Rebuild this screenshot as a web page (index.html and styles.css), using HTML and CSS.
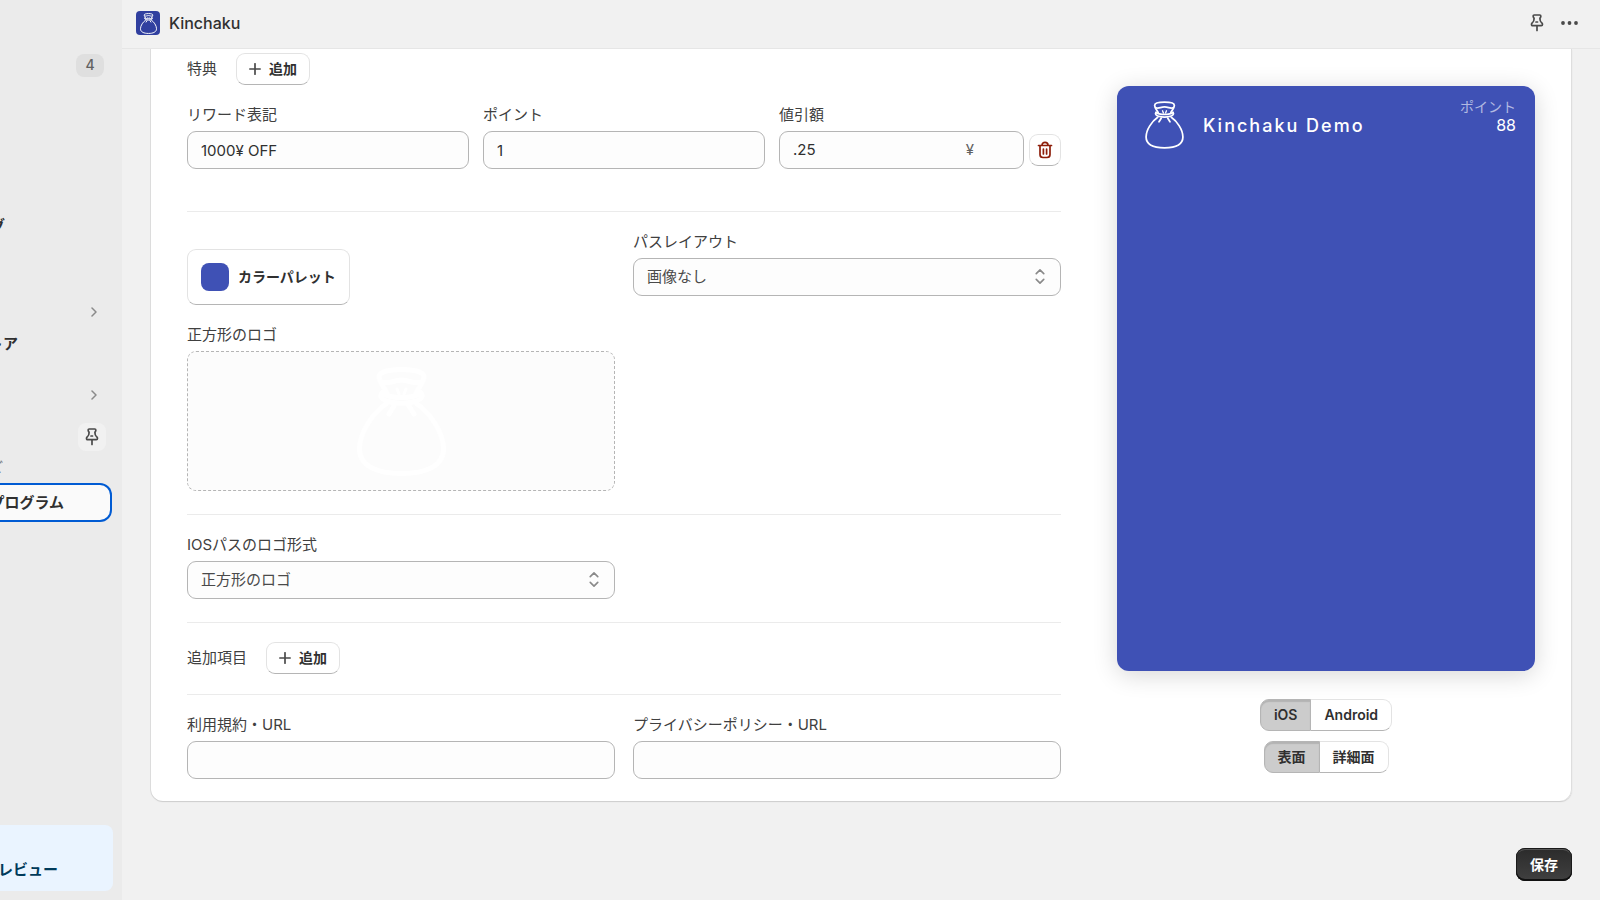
FILE: index.html
```html
<!DOCTYPE html>
<html lang="ja">
<head>
<meta charset="utf-8">
<title>Kinchaku</title>
<link rel="stylesheet" href="styles.css">
</head>
<body>
<svg class="defs" aria-hidden="true">
  <symbol id="bag" viewBox="0 0 89 109">
    <g fill="none" stroke="currentColor" stroke-linecap="round" stroke-linejoin="round">
      <path d="M30 26C27 20 22 15 22 10C22 5 31 2.500 44.500 2.500S67 5 67 10C67 15 62 20 59 26"/>
      <path d="M25 15C32 18 35 13 44.500 13S57 18 64 15"/>
      <path d="M25 26C33 32 56 32 64 26"/>
      <path d="M25 26C22 30 26 33 31 34.500C40 37 49 37 58 34.500C63 33 67 30 64 26"/>
      <path stroke-width="3" d="M40 22l2 5M49 22l-2 5"/>
      <path d="M37 39l-5 8M52 39l5 8"/>
      <path d="M29 37C16 46 2.500 65 2.500 82C2.500 99 20 106.500 44.500 106.500S86.500 99 86.500 82C86.500 65 73 46 60 37"/>
    </g>
  </symbol>
  <symbol id="pin" viewBox="0 0 14 18">
    <path fill="none" stroke="currentColor" stroke-width="1.700" stroke-linecap="round" stroke-linejoin="round" d="M4.200 1h5.600q1 0 1 1v.6c0 .9-.9 1.100-.9 2 0 1.700.4 3.100 1.600 4q1 .8 1 1.700 0 1.400-1.200 1.400H2.700q-1.200 0-1.200-1.400 0-.9 1-1.700c1.200-.9 1.600-2.300 1.600-4 0-.9-.9-1.100-.9-2V2q0-1 1-1zM7 12v4.500M6 8h1.500"/>
  </symbol>
  <symbol id="plus" viewBox="0 0 12 12">
    <path fill="none" stroke="currentColor" stroke-width="1.700" stroke-linecap="round" d="M6 .8v10.400M.8 6h10.400"/>
  </symbol>
  <symbol id="chevron" viewBox="0 0 6 10">
    <path fill="none" stroke="currentColor" stroke-width="1.500" stroke-linecap="round" stroke-linejoin="round" d="M1 1l4 4-4 4"/>
  </symbol>
  <symbol id="updown" viewBox="0 0 10 16">
    <path fill="none" stroke="currentColor" stroke-width="1.700" stroke-linecap="round" stroke-linejoin="round" d="M1 5l4-4 4 4M1 11l4 4 4-4"/>
  </symbol>
  <symbol id="trash" viewBox="0 0 16 18">
    <path fill="none" stroke="currentColor" stroke-width="1.700" stroke-linecap="round" stroke-linejoin="round" d="M1.500 4.500h13M5 4.200C5 2.300 6.300 1.300 8 1.300s3 1 3 2.900M3 4.800v8.700q0 3 3 3h4q3 0 3-3V4.800M6.400 8v5M9.600 8v5"/>
  </symbol>
</svg>
<div class="app">
  <nav class="sidebar">
    <div class="nav-row nav-row-first"><span class="badge">4</span></div>
    <div class="nav-group">
      <div class="nav-row"><span class="cut cut-xs">グ</span></div>
    </div>
    <div class="nav-group nav-group-mid">
      <button class="nav-row nav-toggle" aria-label="開く"><svg class="chevron"><use href="#chevron"/></svg></button>
      <div class="nav-row"><span class="cut cut-sm">トア</span></div>
    </div>
    <div class="nav-group nav-group-apps">
      <button class="nav-row nav-toggle" aria-label="開く"><svg class="chevron"><use href="#chevron"/></svg></button>
    </div>
    <div class="nav-row nav-row-pin"><button class="pin-btn" aria-label="固定"><svg class="pin"><use href="#pin"/></svg></button></div>
    <div class="nav-sub"><span class="cut cut-xxs">ど</span></div>
    <a class="nav-active" href="#"><span class="cut cut-md">プログラム</span></a>
    <div class="notice"><span class="cut cut-notice">レビュー</span></div>
  </nav>
  <div class="main">
    <header class="topbar">
      <span class="app-icon"><svg><use href="#bag"/></svg></span>
      <h1 class="app-name">Kinchaku</h1>
      <button class="icon-btn" aria-label="固定"><svg class="pin"><use href="#pin"/></svg></button>
      <button class="icon-btn" aria-label="その他"><svg class="dots" viewBox="0 0 18 4"><circle cx="2" cy="2" r="1.900"/><circle cx="8.500" cy="2" r="1.900"/><circle cx="15" cy="2" r="1.900"/></svg></button>
    </header>
    <main class="page">
      <div class="card">
        <form class="form" id="program">
          <section class="section section-first">
            <div class="heading"><h2>特典</h2><button type="button" class="btn"><svg class="plus"><use href="#plus"/></svg>追加</button></div>
            <div class="thirds">
              <div class="field"><label for="reward">リワード表記</label><input id="reward" class="control" type="text" value="1000¥ OFF"></div>
              <div class="field"><label for="points">ポイント</label><input id="points" class="control" type="text" value="1"></div>
              <div class="field"><label for="discount">値引額</label>
                <div class="with-action">
                  <div class="control control-suffix"><input id="discount" type="text" value=".25"><span>¥</span></div>
                  <button type="button" class="btn btn-icon" aria-label="削除"><svg class="trash"><use href="#trash"/></svg></button>
                </div>
              </div>
            </div>
          </section>
          <section class="section">
            <div class="halves">
              <button type="button" class="btn btn-palette"><span class="swatch"></span>カラーパレット</button>
              <div class="field"><label for="layout">パスレイアウト</label>
                <div class="select"><select id="layout" class="control"><option>画像なし</option></select><svg><use href="#updown"/></svg></div>
              </div>
              <div class="field"><label for="logo">正方形のロゴ</label>
                <button type="button" id="logo" class="dropzone"><svg><use href="#bag"/></svg></button>
              </div>
            </div>
          </section>
          <section class="section">
            <div class="halves">
              <div class="field"><label for="format">IOSパスのロゴ形式</label>
                <div class="select"><select id="format" class="control"><option>正方形のロゴ</option></select><svg><use href="#updown"/></svg></div>
              </div>
            </div>
          </section>
          <section class="section section-extra">
            <div class="heading"><h2>追加項目</h2><button type="button" class="btn"><svg class="plus"><use href="#plus"/></svg>追加</button></div>
          </section>
          <section class="section">
            <div class="halves">
              <div class="field"><label for="terms">利用規約・URL</label><input id="terms" class="control" type="text"></div>
              <div class="field"><label for="privacy">プライバシーポリシー・URL</label><input id="privacy" class="control" type="text"></div>
            </div>
          </section>
        </form>
        <aside class="preview">
          <div class="pass">
            <svg class="pass-logo"><use href="#bag"/></svg>
            <span class="pass-name">Kinchaku Demo</span>
            <div class="pass-points"><span class="pass-label">ポイント</span><span>88</span></div>
          </div>
          <div class="segmented"><button class="seg seg-on">iOS</button><button class="seg">Android</button></div>
          <div class="segmented"><button class="seg seg-on">表面</button><button class="seg">詳細面</button></div>
        </aside>
      </div>
      <div class="actions"><button class="save" type="submit" form="program">保存</button></div>
    </main>
  </div>
</div>
</body>
</html>
```
FILE: styles.css
```css
* { box-sizing: border-box; }
body {
  margin: 0;
  background: #f1f1f1;
  color: #303030;
  font-family: Inter, "Noto Sans CJK JP", sans-serif;
  font-size: 15px;
  line-height: 22px;
}
button, input, select { font: inherit; color: inherit; margin: 0; }
button { padding: 0; border: 0; background: none; cursor: pointer; }
h1, h2 { margin: 0; font-weight: 400; font-size: 15px; }
.defs { position: absolute; width: 0; height: 0; }

.app { display: flex; min-height: 100vh; }

.sidebar {
  flex: 0 0 122px;
  display: flex;
  flex-direction: column;
  overflow: hidden;
  background: #ebebeb;
  font-weight: 600;
}
.nav-row { display: flex; align-items: center; width: 100%; height: 32px; flex-shrink: 0; }
.nav-row-first { justify-content: flex-end; padding-right: 18px; margin-top: 49px; }
.badge {
  width: 28px;
  height: 23px;
  border-radius: 8px;
  background: #dfdfdf;
  color: #616161;
  font-size: 14px;
  font-weight: 500;
  text-align: center;
}
.nav-group { margin-top: 129px; }
.nav-group-mid { margin-top: 54px; }
.nav-group-apps { margin-top: 19px; }
.nav-toggle { justify-content: flex-end; padding-right: 25px; color: #8a8a8a; }
.chevron { width: 6px; height: 10px; }
.cut { display: flex; justify-content: flex-end; overflow: hidden; white-space: nowrap; }
.cut-xxs { width: 3px; }
.cut-xs { width: 5px; }
.cut-sm { width: 18px; }
.cut-md { width: 64px; }
.cut-notice { width: 58px; }
.nav-row-pin { justify-content: flex-end; padding-right: 16px; margin-top: 10px; }
.pin-btn {
  display: grid;
  place-items: center;
  width: 28px;
  height: 28px;
  border-radius: 8px;
  background: #f1f1f1;
  color: #4a4a4a;
}
.pin { display: block; width: 14px; height: 18px; }
.nav-sub { height: 30px; padding-top: 3px; color: #616161; font-size: 14px; font-weight: 400; }
.nav-active {
  display: flex;
  align-items: center;
  height: 39px;
  margin-right: 10px;
  border: solid #005bd3;
  border-width: 2px 2px 2px 0;
  border-radius: 0 12px 12px 0;
  background: #fafafa;
  color: #303030;
  text-decoration: none;
}
.notice {
  height: 66px;
  margin: auto 9px 9px 0;
  padding-top: 34px;
  border-radius: 0 8px 8px 0;
  background: #eaf4ff;
  color: #003a5a;
}

.main { flex: 1; min-width: 0; display: flex; flex-direction: column; }
.topbar {
  display: flex;
  align-items: center;
  height: 49px;
  padding: 0 21px 2px 14px;
  border-bottom: 1px solid #e6e6e6;
}
.app-icon {
  display: grid;
  place-items: center;
  width: 24px;
  height: 24px;
  border-radius: 4px;
  background: #303f9f;
  color: #fff;
}
.app-icon svg { width: 17px; height: 21px; stroke-width: 5; }
.app-name { flex: 1; margin-left: 9px; font-size: 16px; font-weight: 450; }
.icon-btn { display: grid; place-items: center; color: #4a4a4a; margin-left: 17px; }
.dots { width: 18px; height: 4px; fill: currentColor; }

.page { padding: 0 28px 19px 29px; }
.card {
  display: grid;
  grid-template-columns: 874fr 418fr;
  gap: 56px;
  padding: 4px 37px 22px 36px;
  border-radius: 0 0 12px 12px;
  background: #fff;
  box-shadow: 0 1px 1px #cccccc, inset -1px 0 0 #dedede, -1px 0 0 #dedede;
}
.section { padding: 19px 0 23px; border-bottom: 1px solid #ebebeb; }
.section-first { padding: 0 0 42px; }
.section-extra { padding-bottom: 20px; }
.section:last-child { padding-bottom: 0; border-bottom: 0; }
.heading { display: flex; align-items: center; gap: 19px; }
.heading h2, .field label { color: #404040; }
.thirds { display: grid; grid-template-columns: repeat(3, 1fr); gap: 14px; margin-top: 19px; }
.halves { display: grid; grid-template-columns: 1fr 1fr; gap: 19px 18px; }
.field { min-width: 0; }
.field label { display: block; margin-bottom: 5px; }

.control {
  display: block;
  width: 100%;
  height: 38px;
  padding: 0 13px;
  border: 1px solid #b5b5b5;
  border-radius: 9px;
  background: #fdfdfd;
  appearance: none;
}
.with-action { display: flex; align-items: center; gap: 5px; }
.control-suffix { display: flex; align-items: center; flex: 1; min-width: 0; padding-right: 49px; }
.control-suffix input { flex: 1; min-width: 0; padding: 0; border: 0; background: none; outline: 0; }
.control-suffix span { color: #616161; }
.select { position: relative; color: #4a4a4a; }
.select svg {
  position: absolute;
  top: 11px;
  right: 16px;
  width: 10px;
  height: 15px;
  color: #8a8a8a;
  pointer-events: none;
}

.btn {
  display: inline-flex;
  align-items: center;
  gap: 8px;
  height: 32px;
  padding: 0 12px;
  border: 1px solid #e3e3e3;
  border-bottom-color: #b5b5b5;
  border-radius: 9px;
  background: #fff;
  font-size: 14px;
  font-weight: 600;
}
.plus { width: 12px; height: 12px; color: #4a4a4a; }
.btn-icon { justify-content: center; width: 32px; padding: 0; color: #8e1f0b; }
.trash { width: 16px; height: 18px; }
.btn-palette { justify-self: start; height: 56px; margin-top: 18px; padding: 0 13px; gap: 9px; }
.swatch { width: 28px; height: 28px; border-radius: 8px; background: #3f51b5; }
.dropzone {
  display: grid;
  place-items: center;
  width: 100%;
  height: 140px;
  border: 1px dashed #b5b5b5;
  border-radius: 9px;
  background: #fcfcfc;
  color: #fff;
}
.dropzone svg { width: 89px; height: 109px; stroke-width: 5; }

.preview { display: flex; flex-direction: column; align-items: center; gap: 10px; padding-top: 33px; }
.pass {
  display: flex;
  align-items: flex-start;
  width: 100%;
  aspect-ratio: 5 / 7;
  margin-bottom: 18px;
  padding: 15px 19px 0 28px;
  border-radius: 12px;
  background: #3f51b5;
  color: #fff;
  box-shadow: 0 4px 24px rgba(0, 0, 0, 0.16);
}
.pass-logo { width: 39px; height: 48px; stroke-width: 4; }
.pass-name {
  flex: 1;
  margin: 14px 0 0 19px;
  font-size: 18px;
  font-weight: 500;
  letter-spacing: 2px;
}
.pass-points { display: flex; flex-direction: column; align-items: flex-end; font-size: 16px; line-height: 19px; margin-top: -4px; }
.pass-label { font-size: 14px; color: #b2b9e1; }

.segmented { display: flex; }
.seg {
  height: 32px;
  padding: 0 13px;
  border: 1px solid #e3e3e3;
  border-bottom-color: #b5b5b5;
  border-left: 0;
  border-radius: 0 9px 9px 0;
  background: #fff;
  font-size: 14px;
  font-weight: 600;
}
.seg-on {
  border: 1px solid #b5b5b5;
  border-radius: 9px 0 0 9px;
  background: #cccccc;
  box-shadow: inset 0 2px 1px rgba(0, 0, 0, 0.12);
}

.actions { display: flex; justify-content: flex-end; margin-top: 47px; }
.save {
  height: 33px;
  padding: 0 14px;
  border-radius: 9px;
  background: linear-gradient(#2b2b2b, #404040);
  box-shadow: inset 0 -2px 0 #111, inset 0 0 0 1px #1a1a1a, inset 0 2px 0 #555;
  color: #fff;
  font-size: 14px;
  font-weight: 600;
}
```
